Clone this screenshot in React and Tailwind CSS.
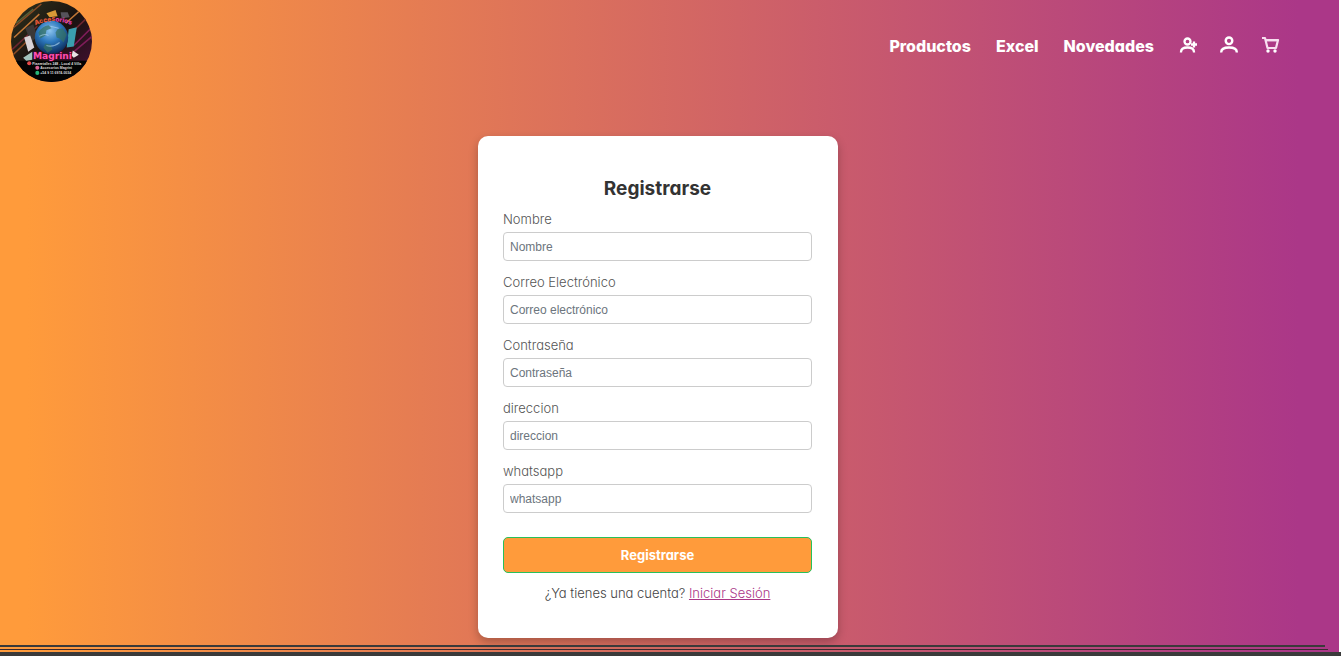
const fields = [
  { id: "nombre", label: "Nombre", placeholder: "Nombre", type: "text" },
  { id: "correo", label: "Correo Electrónico", placeholder: "Correo electrónico", type: "email" },
  { id: "contrasena", label: "Contraseña", placeholder: "Contraseña", type: "password" },
  { id: "direccion", label: "direccion", placeholder: "direccion", type: "text" },
  { id: "whatsapp", label: "whatsapp", placeholder: "whatsapp", type: "tel" },
];

function Logo() {
  return (
    <svg viewBox="0 0 80 80" className="size-[81px]" role="img" aria-label="Accesorios Magrini">
      <defs>
        <clipPath id="disc"><circle cx="40" cy="40" r="40" /></clipPath>
        <radialGradient id="globe" cx="0.45" cy="0.3" r="0.75">
          <stop offset="0" stopColor="#8cc4ee" />
          <stop offset="0.45" stopColor="#2c78bd" />
          <stop offset="1" stopColor="#071f4a" />
        </radialGradient>
        <linearGradient id="night" x1="0" y1="0" x2="1" y2="1">
          <stop offset="0" stopColor="#30331d" />
          <stop offset="0.5" stopColor="#1a1210" />
          <stop offset="1" stopColor="#4a1038" />
        </linearGradient>
        <path id="arch" d="M24 24Q40 17 58 23" />
      </defs>
      <g clipPath="url(#disc)">
        <rect width="80" height="80" fill="url(#night)" />
        <g strokeWidth="1.5" fill="none">
          <path d="M-2 30 30 3M0 55 24 32" stroke="#8a4a24" />
          <path d="M3 36 28 13M54 22 73 5" stroke="#c07636" />
          <path d="M1 48 26 25M60 31 80 12" stroke="#6d2630" />
          <path d="M62 44 80 26M61 51 80 35" stroke="#7d1c58" />
          <path d="M5 22 22 8" stroke="#596037" />
        </g>
        <path d="M35 12 44 9 46 15 38 16Z" fill="#d89a37" />
        <path d="M49 11h7l2 5-8 1z" fill="#56535b" />
        <path d="m14 27 8-4 4 12-6 6z" fill="#3c3838" />
        <path d="m13 36 6-2 4 12-6 4z" fill="#d8d2d6" />
        <path d="m57 28 8-2-3 19-7 1z" fill="#3a9eae" />
        <circle cx="40" cy="36" r="16.500" fill="url(#globe)" />
        <path d="M27 31q4-6 10-7l3 3-5 2-1 5-5 3zM46 28l5-1 4 6-3 8-4-4-3-1-1-5zM34 42l5 1 2 5-5 3-4-5z" fill="#35705f" opacity=".7" />
        <path d="M28 35q5-3 9-1M35 44q7 2 13-3M39 25l8 2" stroke="#b6dbf1" strokeWidth="1" fill="none" opacity=".6" />
        <rect y="59" width="80" height="21" fill="#030303" />
        <path d="m12 56 9-6v8l-6 1z" fill="#a2c4bd" />
        <path d="m61 49 6 4-5 3-2-2z" fill="#e8e2e5" />
        <text fontSize="6.500" fontWeight="800" fill="#e8593a" fontFamily="Inter, sans-serif">
          <textPath href="#arch">Acces<tspan fill="#e33cb2">orios</tspan></textPath>
        </text>
        <text x="41" y="57" textAnchor="middle" fontSize="9" fontWeight="700" fill="#ff4fae" stroke="#4b0834" strokeWidth="1" paintOrder="stroke" fontFamily="DejaVu Sans, sans-serif">Magrini</text>
        <circle cx="18" cy="61.500" r="2" fill="#e64949" />
        <circle cx="26" cy="66" r="2" fill="#dc6396" />
        <circle cx="26" cy="71" r="2" fill="#27b678" />
        <g fill="#ddd" fontSize="3.400" fontWeight="700" fontFamily="Liberation Sans, sans-serif">
          <text x="21" y="63">Piazzetalles 248 - Local 4 Villa</text>
          <text x="29" y="67.500">Accesorios Magrini</text>
          <text x="29" y="72.500">+54 9 11 6974-0034</text>
        </g>
      </g>
    </svg>
  );
}

function UserPlusIcon() {
  return (
    <svg viewBox="0 0 20 20" className="size-5" fill="none" stroke="#fff" strokeWidth="2.300" aria-hidden="true">
      <circle cx="8.500" cy="5.500" r="3" />
      <path d="M2 16.500v-.5c0-3 2.200-4.500 6.500-4.500S15 13 15 16v.5M15 5.500v6M12 8.500h6" />
    </svg>
  );
}

function UserIcon() {
  return (
    <svg viewBox="0 0 20 20" className="size-5" fill="none" stroke="#fff" strokeWidth="2.400" aria-hidden="true">
      <circle cx="9" cy="4.800" r="3.300" />
      <path d="M1.200 16.500v-.3c0-3 2.800-4.700 7.800-4.700s7.800 1.700 7.800 4.700v.3" />
    </svg>
  );
}

function CartIcon() {
  return (
    <svg viewBox="0 0 20 20" className="size-5" fill="none" stroke="#f8dff0" strokeWidth="2.200" aria-hidden="true">
      <path d="M1 2h3l2.500 10H15L17 4H5" strokeLinejoin="round" />
      <path d="M5 5h11" strokeWidth="1.500" opacity=".6" />
      <circle cx="7" cy="15" r="1.700" fill="#fff" stroke="none" />
      <circle cx="14" cy="15" r="1.700" fill="#fff" stroke="none" />
    </svg>
  );
}

export default function App() {
  return (
    <div className="flex min-h-screen flex-col bg-white font-['Inter',sans-serif] [font-feature-settings:'cv11']">
      <div className="mr-[2px] flex grow flex-col bg-linear-to-r/srgb from-[#ff9b3b] from-2% to-[#ab3788] to-97%">
        <header className="flex items-start justify-between pt-px pr-[58px] pl-[11px]">
          <a href="#inicio"><Logo /></a>
          <nav className="flex items-center gap-[25px] pt-[33px] text-base leading-6 font-extrabold text-white">
            <a href="#productos">Productos</a>
            <a href="#excel">Excel</a>
            <a href="#novedades">Novedades</a>
            <div className="flex items-center gap-[21px]">
              <a href="#registro" aria-label="Registrarse"><UserPlusIcon /></a>
              <a href="#cuenta" aria-label="Mi cuenta"><UserIcon /></a>
              <a href="#carrito" aria-label="Carrito"><CartIcon /></a>
            </div>
          </nav>
        </header>

        <main className="flex grow justify-center pt-[54px] pr-[23px] pb-[7px]">
          <form className="w-[360px] rounded-[10px] bg-white pt-[41px] pr-[26px] pb-9 pl-[25px] shadow-[0_4px_10px_rgba(0,0,0,0.25)]" onSubmit={(e) => e.preventDefault()}>
            <h1 className="mb-[9px] text-center text-[19px] leading-6 font-bold text-[#333]">Registrarse</h1>
            <div className="flex flex-col gap-3">
              {fields.map((f) => (
                <div key={f.id} className="flex flex-col gap-1">
                  <label htmlFor={f.id} className="text-[13px] leading-[18px] font-light text-[#555]">{f.label}</label>
                  <input id={f.id} type={f.type} placeholder={f.placeholder} className="h-[29px] w-full rounded-[4px] border border-[#ccc] px-[6px] font-['Liberation_Sans',sans-serif] text-xs text-[#333] placeholder:text-[#6c757d]" />
                </div>
              ))}
            </div>
            <button type="submit" className="mt-6 h-9 w-full rounded-[5px] border border-[#28c05a] bg-[#ff9b3b] pt-[2px] text-[13px] font-bold text-white">Registrarse</button>
            <p className="mt-[11px] text-center text-[13px] leading-[18px] font-light text-[#444]">
              ¿Ya tienes una cuenta? <a href="#login" className="text-[#ab3788] underline">Iniciar Sesión</a>
            </p>
          </form>
        </main>

        <div className="flex flex-col gap-[2px] pb-[2px]">
          <div className="mr-[14px] h-[2px] bg-[#3a3a3a]" />
          <div className="mr-[11px] h-px bg-[#3a2a30]" />
        </div>
      </div>
      <footer className="h-1 bg-[#3a3a3a]" />
    </div>
  );
}
